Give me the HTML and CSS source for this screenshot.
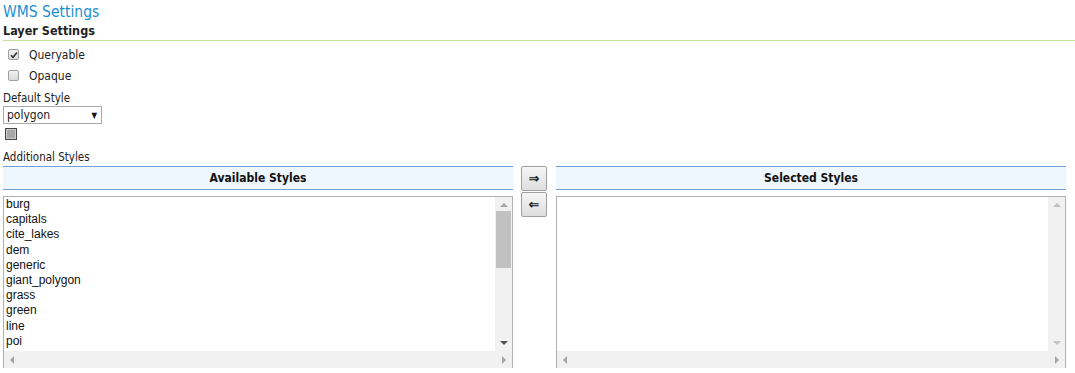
FILE: index.html
```html
<!DOCTYPE html>
<html>
<head>
<meta charset="utf-8">
<link rel="stylesheet" href="styles.css">
</head>
<body>
<div class="page">
  <h1 class="title">WMS Settings</h1>
  <h2 class="section">Layer Settings</h2>
  <div class="check-row"><span class="cb checked"><svg width="8" height="8" viewBox="0 0 8 8"><path d="M1 4.2 L3 6.2 L7 1.5" fill="none" stroke="#333" stroke-width="1.6"/></svg></span><span>Queryable</span></div>
  <div class="check-row"><span class="cb"></span><span>Opaque</span></div>
  <div class="label first">Default Style</div>
  <div class="select"><span>polygon</span><span class="arrow">▼</span></div>
  <div class="swatch"></div>
  <div class="label add">Additional Styles</div>
  <div class="styles">
    <div class="col">
      <div class="head">Available Styles</div>
      <div class="listbox">
        <div class="lb-main">
          <ul class="items">
            <li>burg</li><li>capitals</li><li>cite_lakes</li><li>dem</li><li>generic</li><li>giant_polygon</li><li>grass</li><li>green</li><li>line</li><li>poi</li>
          </ul>
          <div class="vbar"><span class="tri up dark"></span><span class="thumb"></span><span class="fill"></span><span class="tri down black"></span></div>
        </div>
        <div class="hbar"><span class="tri left"></span><span class="fill"></span><span class="tri right"></span></div>
      </div>
    </div>
    <div class="buttons">
      <button class="btn">⇒</button>
      <button class="btn">⇐</button>
    </div>
    <div class="col">
      <div class="head">Selected Styles</div>
      <div class="listbox">
        <div class="lb-main">
          <ul class="items"></ul>
          <div class="vbar"><span class="tri up"></span><span class="fill"></span><span class="tri down"></span></div>
        </div>
        <div class="hbar"><span class="tri left"></span><span class="fill"></span><span class="tri right"></span></div>
      </div>
    </div>
  </div>
</div>
</body>
</html>
```

FILE: styles.css
```css
html, body { margin: 0; padding: 0; background: #fff; }
.page {
  padding: 0 0 0 3px;
  font-family: "DejaVu Sans", sans-serif;
  font-stretch: condensed;
  font-size: 11px;
  color: #222;
}
.title {
  margin: 0;
  padding-top: 3px;
  font-size: 15.5px;
  font-weight: normal;
  color: #1b8fcf;
  line-height: 19px;
  height: 20px;
}
.section {
  margin: 0;
  font-size: 12.5px;
  font-weight: bold;
  color: #222;
  line-height: 16px;
  border-bottom: 1px solid #c3e09a;
  padding-bottom: 1px;
}
.check-row {
  display: flex;
  align-items: center;
  gap: 10px;
  height: 21px;
  padding-left: 5px;
  font-size: 12px;
}
.check-row:first-of-type { margin-top: 3px; }
.cb {
  width: 9px; height: 9px;
  border: 1px solid #a0a0a0;
  border-radius: 2px;
  background: linear-gradient(#f0f0f0, #dcdcdc);
  display: flex; align-items: center; justify-content: center;
}
.label { font-size: 11.5px; height: 16px; line-height: 16px; }
.label.first { margin-top: 4px; }
.select {
  height: 16px;
  border: 1px solid #a9a9a9;
  display: flex; justify-content: space-between; align-items: center;
  padding: 0 0 0 3px;
  box-sizing: content-box;
  font-size: 12px;
  color: #222;
  width: 94px;
}
.select .arrow { font-size: 8px; margin-right: 4px; color: #111; }
.swatch {
  margin: 4px 0 0 2px;
  width: 10px; height: 10px;
  border: 1px solid #444;
  background: #a8a8a8;
  box-shadow: inset 0 0 0 1px #ccc;
}
.label.add { margin-top: 9px; }
.styles {
  display: flex;
  align-items: flex-start;
  margin-top: 1px;
}
.col { width: 510px; }
.head {
  height: 22px;
  line-height: 22px;
  text-align: center;
  font-weight: bold;
  font-size: 12px;
  color: #111;
  background: #eef6fe;
  border-top: 1px solid #74a2d6;
  border-bottom: 1px solid #74a2d6;
}
.listbox {
  margin-top: 6px;
  height: 171px;
  border: 1px solid #b0b0b0;
  border-bottom: none;
  display: flex;
  flex-direction: column;
}
.lb-main { flex: 1; display: flex; min-height: 0; }
.items {
  flex: 1;
  margin: 0;
  padding: 0 0 0 2px;
  list-style: none;
  font-family: "Liberation Sans", Arial, sans-serif;
  font-stretch: normal;
  font-size: 12px;
  line-height: 15.2px;
  color: #111;
}
.vbar {
  width: 17px;
  background: #f1f1f1;
  display: flex;
  flex-direction: column;
  align-items: center;
}
.vbar .fill { flex: 1; }
.vbar .thumb { width: 15px; height: 57px; background: #c1c1c1; margin-top: 4px; }
.hbar {
  height: 17px;
  background: #f1f1f1;
  display: flex;
  align-items: center;
}
.hbar .fill { flex: 1; }
.tri { width: 0; height: 0; display: block; }
.tri.up { border-left: 4px solid transparent; border-right: 4px solid transparent; border-bottom: 4px solid #c0c0c0; margin-top: 6px; }
.tri.up.dark { border-bottom-color: #a3a3a3; }
.tri.down { border-left: 4px solid transparent; border-right: 4px solid transparent; border-top: 4px solid #c0c0c0; margin-bottom: 6px; }
.tri.down.black { border-top-color: #505050; }
.tri.left { border-top: 4px solid transparent; border-bottom: 4px solid transparent; border-right: 4px solid #a3a3a3; margin-left: 6px; }
.tri.right { border-top: 4px solid transparent; border-bottom: 4px solid transparent; border-left: 4px solid #a3a3a3; margin-right: 6px; }
.buttons {
  width: 43px;
  display: flex;
  flex-direction: column;
  align-items: flex-start;
  gap: 1px;
  padding-left: 8px;
  box-sizing: border-box;
}
.btn {
  width: 26px; height: 25px;
  margin: 0; padding: 0;
  border: 1px solid #a0a0a0;
  border-radius: 2px;
  background: linear-gradient(#f6f6f6, #dedede);
  font-family: "DejaVu Sans", sans-serif;
  font-size: 13px;
  font-weight: bold;
  color: #111;
  line-height: 20px;
}
```
